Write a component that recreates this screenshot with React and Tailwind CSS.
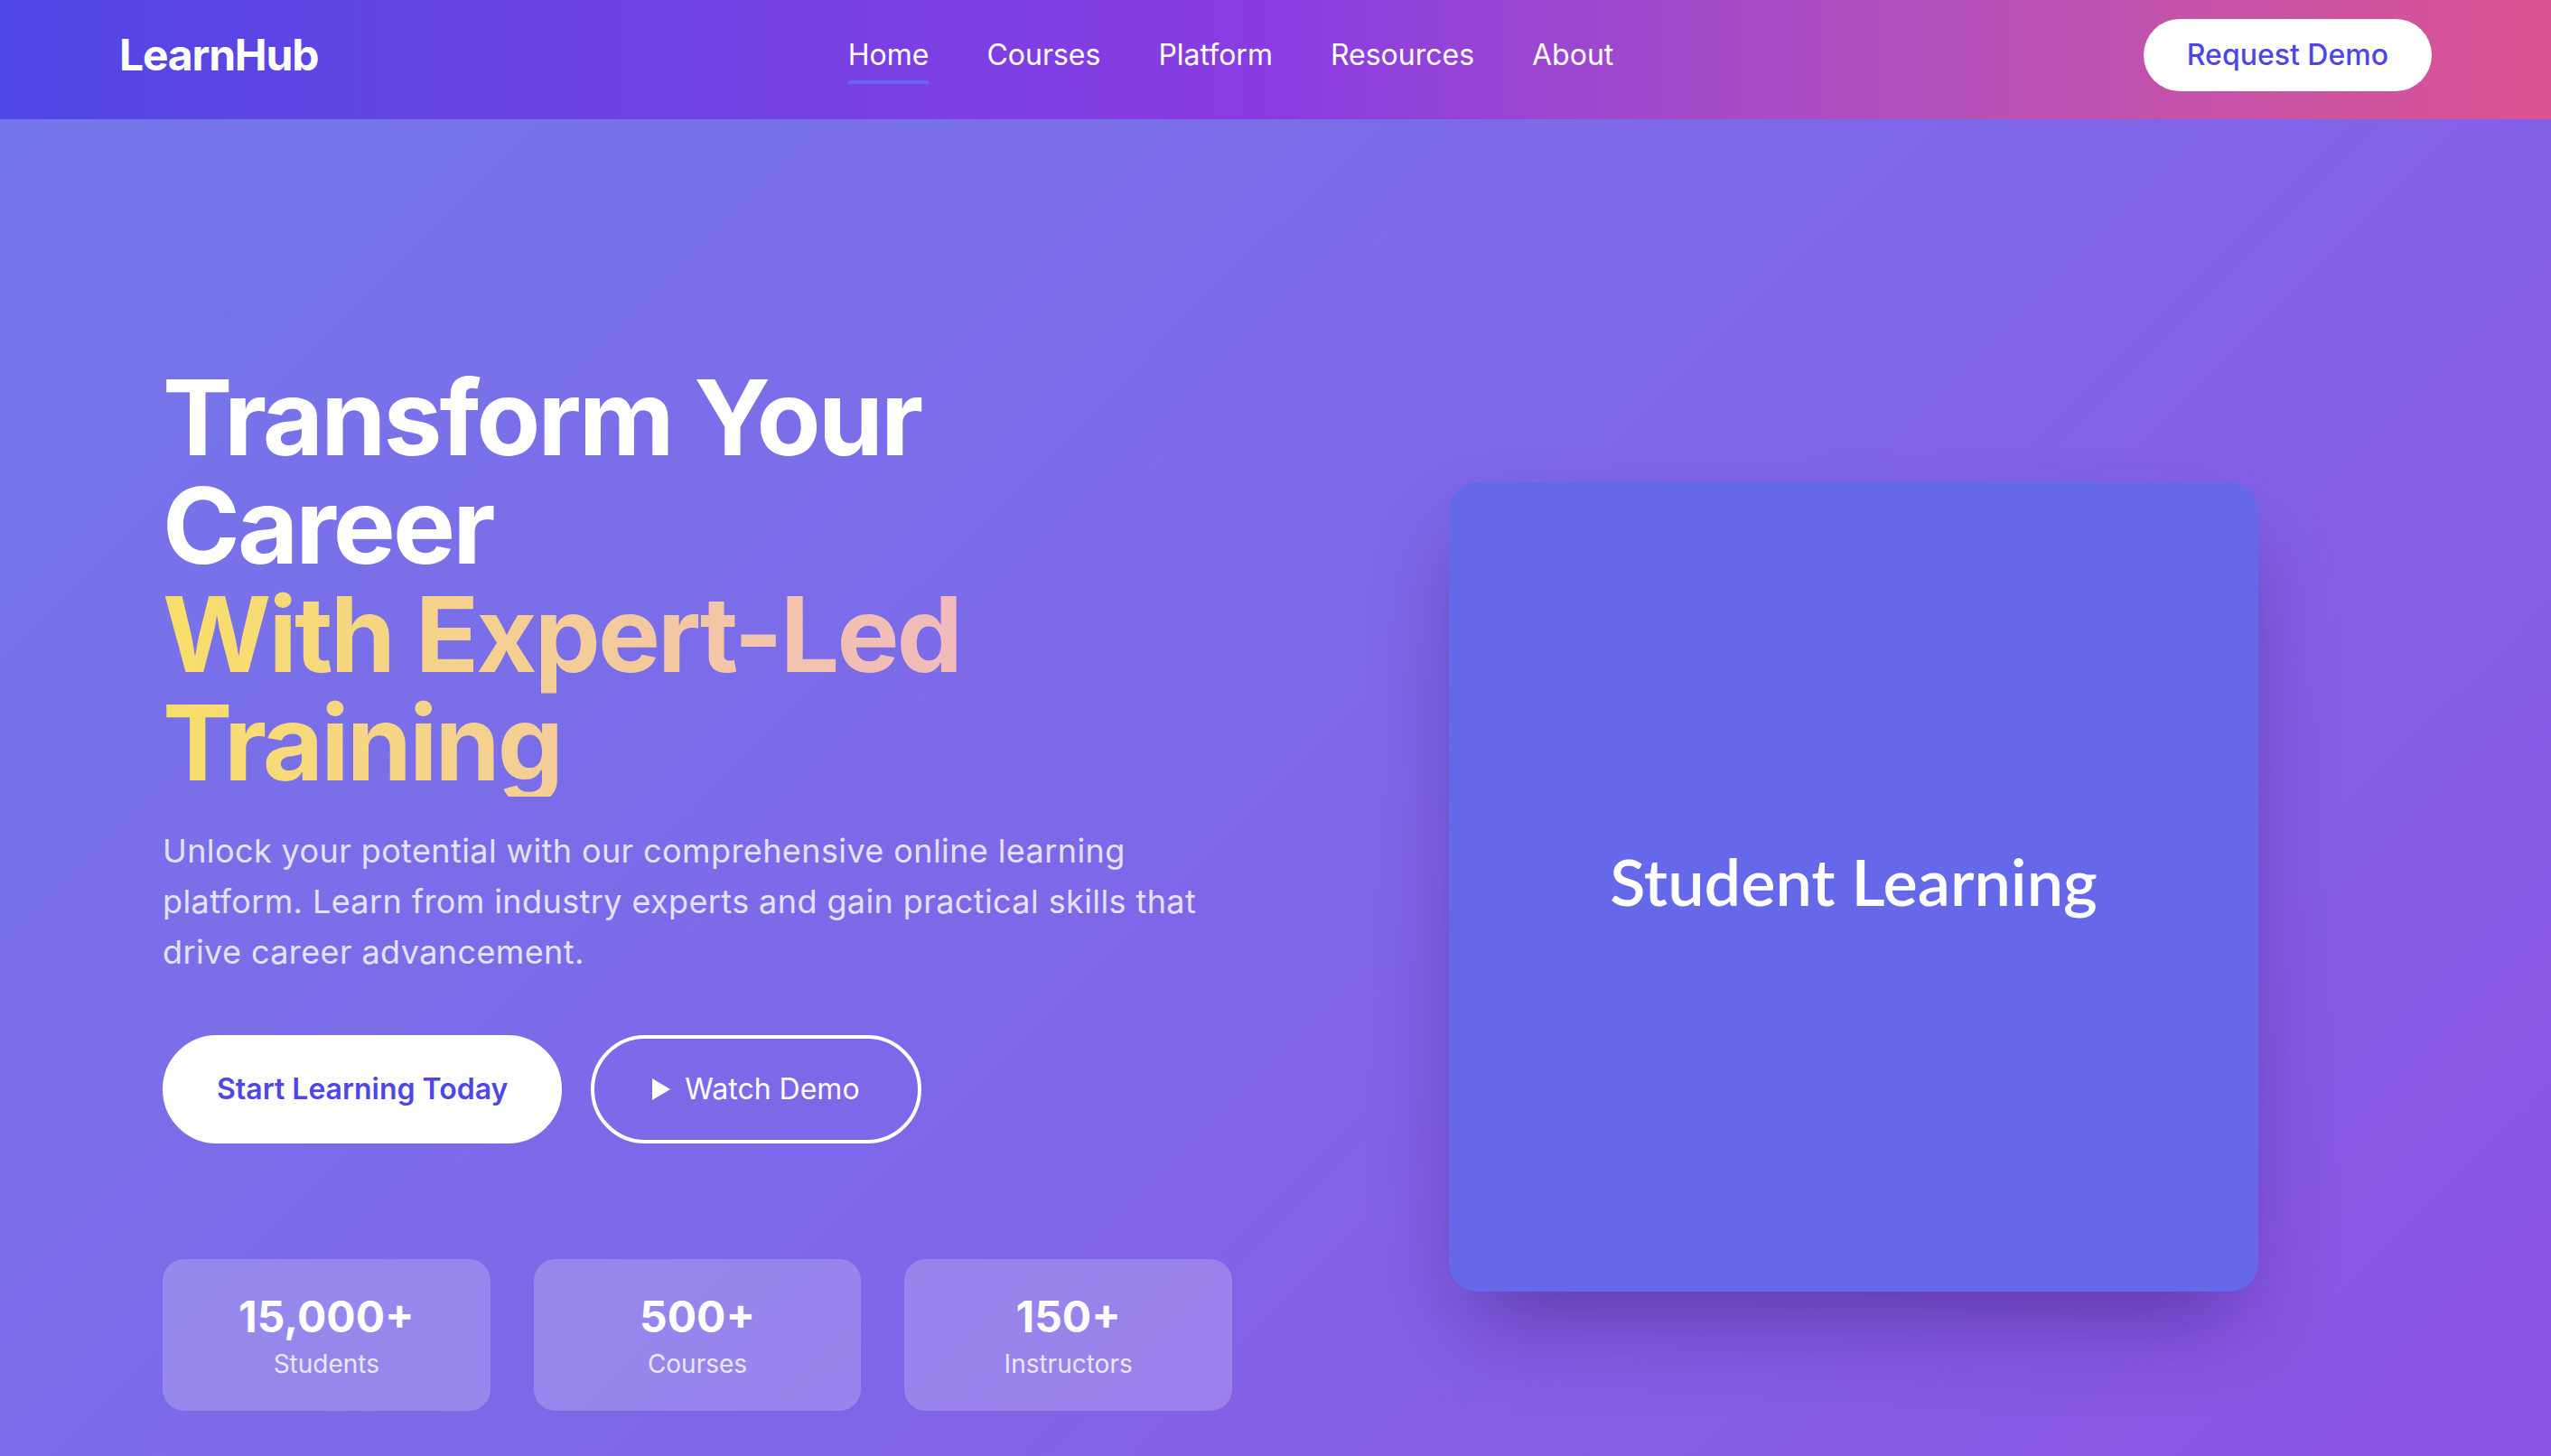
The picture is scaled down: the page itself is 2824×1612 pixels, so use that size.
// LearnHub landing hero
// The reference is a 2x capture, so the page is laid out at 1x and zoomed.

const navLinks = ["Home", "Courses", "Platform", "Resources", "About"];

const stats = [
  { value: "15,000+", label: "Students" },
  { value: "500+", label: "Courses" },
  { value: "150+", label: "Instructors" },
];

function Navbar() {
  return (
    <header className="h-[66px] bg-linear-to-r from-[#4f46e5] via-[#8a3be1] to-[#dc5392] pb-[5px]">
      <div className="mx-auto flex h-full max-w-7xl items-center justify-between">
        <a href="#" className="text-2xl font-bold tracking-tight text-white">
          LearnHub
        </a>
        <nav className="flex items-center gap-8">
          {navLinks.map((link, i) => (
            <a key={link} href="#" className="relative text-base text-white">
              {link}
              {i === 0 && (
                <span className="absolute -bottom-1 left-0 h-0.5 w-full bg-[#6366f1]" />
              )}
            </a>
          ))}
        </nav>
        <button className="rounded-full bg-white px-6 py-2 text-base font-medium text-[#4f46e5]">
          Request Demo
        </button>
      </div>
    </header>
  );
}

function StatCard({ value, label }) {
  return (
    <div className="rounded-xl bg-white/20 p-4 text-center">
      <div className="text-2xl font-bold text-white">{value}</div>
      <div className="text-sm text-white/80">{label}</div>
    </div>
  );
}

function Hero() {
  return (
    <section className="min-h-[740px] bg-linear-135 from-[#7477ea] via-[#7f66e8] to-[#8c52e2] pt-[135px] pb-24">
      <div className="mx-auto grid max-w-7xl grid-cols-2 items-center gap-12 px-6">
        <div>
          <h1 className="mb-4 text-[58px] leading-[60px] font-bold tracking-tight text-white">
            Transform Your Career
            <span className="block bg-linear-to-r from-[#f8df68] to-[#eeacd0] bg-clip-text text-transparent">
              With Expert-Led Training
            </span>
          </h1>
          <p className="mb-8 text-lg tracking-[0.2px] text-white/80">
            Unlock your potential with our comprehensive online learning
            platform. Learn from industry experts and gain practical skills that
            drive career advancement.
          </p>
          <div className="mb-16 flex gap-4">
            <button className="rounded-full border-2 border-white bg-white px-7 py-4 text-base font-semibold text-[#4f46e5]">
              Start Learning Today
            </button>
            <button className="flex items-center gap-2 rounded-full border-2 border-white px-8 py-4 text-base text-white">
              <svg width="10" height="12" viewBox="0 0 10 12" fill="currentColor">
                <path d="M0 0L10 6L0 12Z" />
              </svg>
              Watch Demo
            </button>
          </div>
          <div className="grid grid-cols-3 gap-6">
            {stats.map((s) => (
              <StatCard key={s.label} {...s} />
            ))}
          </div>
        </div>

        <div className="mx-auto flex h-[448px] w-[448px] items-center justify-center rounded-2xl bg-[#6468e9] shadow-[0_25px_50px_-12px_rgba(40,10,90,0.45)]">
          <span className="pb-[7px] font-['Lato',sans-serif] text-4xl font-semibold text-white">
            Student Learning
          </span>
        </div>
      </div>
    </section>
  );
}

export default function App() {
  return (
    <div className="[zoom:2] font-[Inter,'Noto_Sans',sans-serif] antialiased">
      <Navbar />
      <Hero />
    </div>
  );
}
